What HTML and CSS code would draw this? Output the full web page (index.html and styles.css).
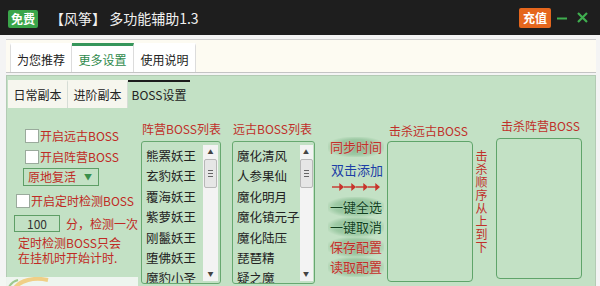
FILE: index.html
```html
<!DOCTYPE html>
<html lang="zh-CN">
<head>
    <meta charset="UTF-8">
    <meta name="viewport" content="width=device-width, initial-scale=1.0">
    <title>【风筝】多功能辅助1.3</title>
    <link rel="stylesheet" href="styles.css">
</head>
<body>
    <div class="titlebar">
        <span class="badge badge-free">免费</span>
        <span class="app-title">【风筝】 多功能辅助1.3</span>
        <span class="spacer"></span>
        <span class="badge badge-pay">充值</span>
        <svg class="win-btn btn-min" width="10" height="10" viewBox="0 0 10 10"><path d="M0 5.5H10" stroke="#3fae4f" stroke-width="2"/></svg>
        <svg class="win-btn btn-close" width="11" height="11" viewBox="0 0 11 11"><path d="M1 1L10 10M10 1L1 10" stroke="#3fae4f" stroke-width="2.2"/></svg>
    </div>

    <div class="window">
        <div class="tabbar">
            <div class="tab">为您推荐</div>
            <div class="tab active">更多设置</div>
            <div class="tab">使用说明</div>
        </div>

        <div class="panel">
            <div class="subtabs">
                <div class="subtab">日常副本</div>
                <div class="subtab">进阶副本</div>
                <div class="subtab active">BOSS设置</div>
            </div>

            <div class="content">
                <!-- left options -->
                <div class="col-opts">
                    <label class="check-row row-1"><span class="checkbox"></span>开启远古BOSS</label>
                    <label class="check-row row-2"><span class="checkbox"></span>开启阵营BOSS</label>
                    <div class="select">原地复活<span class="select-arrow">▼</span></div>
                    <label class="check-row row-3"><span class="checkbox"></span>开启定时检测BOSS</label>
                    <div class="interval-row">
                        <span class="num-input">100</span>
                        <span class="red">分，检测一次</span>
                    </div>
                    <p class="note">定时检测BOSS只会<br>在挂机时开始计时.</p>
                </div>

                <!-- boss lists -->
                <div class="col-list list-camp">
                    <div class="col-title">阵营BOSS列表</div>
                    <div class="listbox">
                        <ul class="items">
                            <li>熊罴妖王</li>
                            <li>玄豹妖王</li>
                            <li>覆海妖王</li>
                            <li>紫萝妖王</li>
                            <li>刚鬣妖王</li>
                            <li>堕佛妖王</li>
                            <li>魔豹小圣</li>
                        </ul>
                        <div class="scrollbar">
                            <span class="sb-arrow">▲</span>
                            <span class="sb-thumb"><i></i><i></i><i></i></span>
                            <span class="sb-fill"></span>
                            <span class="sb-arrow">▼</span>
                        </div>
                    </div>
                </div>

                <div class="col-list list-ancient">
                    <div class="col-title">远古BOSS列表</div>
                    <div class="listbox">
                        <ul class="items">
                            <li>魔化清风</li>
                            <li>人参果仙</li>
                            <li>魔化明月</li>
                            <li>魔化镇元子</li>
                            <li>魔化陆压</li>
                            <li>琵琶精</li>
                            <li>疑之魔</li>
                        </ul>
                        <div class="scrollbar">
                            <span class="sb-arrow">▲</span>
                            <span class="sb-thumb"><i></i><i></i><i></i></span>
                            <span class="sb-fill"></span>
                            <span class="sb-arrow">▼</span>
                        </div>
                    </div>
                </div>

                <!-- action buttons -->
                <div class="col-actions">
                    <div class="act act-red">同步时间</div>
                    <div class="act-hint">双击添加</div>
                    <svg class="arrows" width="48" height="8" viewBox="0 0 48 8">
                        <g stroke="#c8342c" stroke-width="1.4" fill="#c8342c">
                            <path d="M0 4H9"/><path d="M8 1.5L11 4L8 6.5Z"/>
                            <path d="M12 4H21"/><path d="M20 1.5L23 4L20 6.5Z"/>
                            <path d="M24 4H33"/><path d="M32 1.5L35 4L32 6.5Z"/>
                            <path d="M36 4H45"/><path d="M44 1.5L47 4L44 6.5Z"/>
                        </g>
                    </svg>
                    <div class="act act-green">一键全选</div>
                    <div class="act act-green">一键取消</div>
                    <div class="act act-red">保存配置</div>
                    <div class="act act-red">读取配置</div>
                </div>

                <!-- kill order -->
                <div class="col-kill kill-ancient">
                    <div class="col-title">击杀远古BOSS</div>
                    <div class="kill-box"></div>
                </div>
                <div class="vtext">击杀顺序从上到下</div>
                <div class="col-kill kill-camp">
                    <div class="col-title">击杀阵营BOSS</div>
                    <div class="kill-box"></div>
                </div>
            </div>
        </div>
    </div>

    <div class="watermark">
        <svg width="60" height="9" viewBox="0 0 60 9"><path d="M14 12C20 3 34 0 48 3" stroke="#f0cf86" stroke-width="4" fill="none"/><path d="M8 12C10 7 14 4 18 3" stroke="#9cc98e" stroke-width="2" fill="none"/></svg>
    </div>
</body>
</html>
```

FILE: styles.css
```css
body {
    margin: 0;
    width: 600px;
    height: 286px;
    overflow: hidden;
    position: relative;
    background: #eceeec;
    font-family: "Noto Sans CJK SC", "Liberation Sans", sans-serif;
    font-size: 12px;
    color: #222;
}
.titlebar {
    height: 35px;
    background: #1e1e1e;
    display: flex;
    align-items: center;
    padding: 0 12px 0 8px;
}
.badge {
    display: flex;
    align-items: center;
    justify-content: center;
    color: #fff;
    font-weight: bold;
    font-size: 12px;
    border-radius: 2px;
}
.badge-free {
    width: 30px;
    height: 18px;
    margin-top: 2px;
    background: #3aa54a;
}
.app-title {
    margin-left: 12px;
    color: #f0f0f0;
    font-size: 14px;
}
.spacer {
    flex: 1;
}
.badge-pay {
    width: 32px;
    height: 20px;
    background: #e5661d;
}
.btn-min {
    margin-left: 6px;
}
.btn-close {
    margin-left: 10px;
}

.window {
    padding: 4px 4px 0 6px;
    background: #f4f4f4;
}
.tabbar {
    height: 29px;
    padding-top: 3px;
    padding-left: 4px;
    display: flex;
    background: #fdfbf2;
    border-top: 1px solid #cfcfcf;
    border-bottom: 1px solid #c4c4c4;
}
.tab {
    width: 62px;
    display: flex;
    align-items: center;
    justify-content: center;
    background: #fff;
    border-right: 1px solid #dcdcdc;
    border-top: 3px solid transparent;
    box-sizing: border-box;
}
.tab:first-child {
    border-left: 1px solid #dcdcdc;
}
.tab.active {
    border-top-color: #36965a;
    color: #2f8a4c;
}

.panel {
    margin-top: 2px;
    height: 220px;
    background: #c3e1c5;
    border: 1px solid #b3cbb4;
    padding-top: 4px;
}
.subtabs {
    display: flex;
    height: 28px;
    padding-left: 1px;
}
.subtab {
    width: 60px;
    display: flex;
    align-items: center;
    justify-content: center;
    padding-bottom: 2px;
    background: #f6f6ee;
    border-right: 1px solid #d6ddd6;
    border-top: 2px solid transparent;
    box-sizing: border-box;
}
.subtab.active {
    width: 62px;
    background: transparent;
    border-top-color: #1c1c1c;
    border-right: none;
}

.content {
    display: flex;
    align-items: flex-start;
}
.red {
    color: #c02a24;
}
.col-opts {
    width: 134px;
    color: #c02a24;
}
.check-row {
    display: flex;
    align-items: center;
    height: 15px;
}
.checkbox {
    width: 14px;
    height: 14px;
    background: #fff;
    border: 1px solid #9aaa9c;
    box-sizing: border-box;
    margin-right: 1px;
}
.row-1 {
    margin: 20px 0 0 18px;
}
.row-2 {
    margin: 6px 0 0 18px;
}
.row-3 {
    margin: 7px 0 0 9px;
}
.select {
    position: relative;
    width: 76px;
    height: 18px;
    margin: 4px 0 0 16px;
    box-sizing: border-box;
    border: 1px solid #5e9e66;
    padding-left: 4px;
    line-height: 16px;
}
.select-arrow {
    position: absolute;
    right: 6px;
    top: 0;
    font-size: 8px;
    color: #3a8f4c;
}
.interval-row {
    display: flex;
    align-items: center;
    margin: 7px 0 0 7px;
}
.num-input {
    width: 46px;
    height: 17px;
    box-sizing: border-box;
    border: 1px solid #5e9e66;
    text-align: center;
    line-height: 15px;
    color: #333;
    margin-right: 6px;
}
.note {
    margin: 3px 0 0 11px;
    line-height: 15px;
}

.col-title {
    height: 14px;
    line-height: 14px;
    color: #c0302a;
    white-space: nowrap;
}
.col-list .col-title {
    margin: 14px 0 0 1px;
}
.list-camp {
    width: 80px;
}
.list-ancient {
    width: 83px;
    margin-left: 11px;
}
.listbox {
    margin-top: 5px;
    height: 143px;
    box-sizing: border-box;
    border: 1px solid #67a870;
    border-radius: 3px;
    display: flex;
    overflow: hidden;
}
.items {
    flex: 1;
    list-style: none;
    margin: 0;
    padding: 4px 0 0 4px;
}
.items li {
    height: 20.4px;
    line-height: 20px;
    white-space: nowrap;
    overflow: hidden;
    font-size: 12.5px;
}
.scrollbar {
    width: 15px;
    margin: 3px 2px 2px 0;
    background: #f3f3f3;
    display: flex;
    flex-direction: column;
    align-items: center;
}
.sb-arrow {
    height: 14px;
    line-height: 14px;
    font-size: 6px;
    color: #444;
}
.sb-thumb {
    width: 13px;
    height: 29px;
    box-sizing: border-box;
    border: 1px solid #b8b8b8;
    border-radius: 2px;
    background: #e6e6e6;
    display: flex;
    flex-direction: column;
    align-items: center;
    justify-content: center;
    gap: 2px;
}
.sb-thumb i {
    width: 5px;
    height: 1px;
    background: #666;
}
.sb-fill {
    flex: 1;
}

.col-actions {
    width: 59px;
    margin-left: 13px;
    padding-top: 29px;
    display: flex;
    flex-direction: column;
    align-items: flex-start;
    font-size: 13px;
}
.act {
    height: 20px;
    line-height: 20px;
    padding: 0 2px;
    background: radial-gradient(ellipse at center, rgba(70, 140, 90, 0.55) 0%, rgba(90, 160, 105, 0.35) 55%, rgba(195, 225, 197, 0) 78%);
}
.act-red {
    color: #c0302a;
    text-shadow: 0 0 2px #f0c8c0;
}
.act-green {
    color: #123f1e;
    text-shadow: 0 0 2px #c8f0d0;
}
.act-hint {
    margin-top: 3px;
    height: 20px;
    line-height: 20px;
    padding-left: 3px;
    color: #1c3ea6;
}
.arrows {
    margin: 3px 0 6px 4px;
}

.col-kill {
    width: 86px;
}
.kill-ancient .col-title {
    margin: 16px 0 0 2px;
}
.kill-camp {
    margin-left: 6px;
}
.kill-camp .col-title {
    margin: 11px 0 5px 5px;
}
.kill-box {
    margin-top: 3px;
    height: 141px;
    box-sizing: border-box;
    border: 1px solid #5fa46a;
    border-radius: 4px;
}
.vtext {
    width: 14px;
    margin: 42px 0 0 3px;
    writing-mode: vertical-rl;
    text-orientation: upright;
    letter-spacing: 1px;
    color: #c0302a;
}

/* faded logo strip bottom-left */
.watermark {
    position: absolute;
    left: 0;
    top: 277px;
    width: 138px;
    height: 9px;
    background: rgba(243, 247, 243, 0.9);
}
.watermark svg {
    display: block;
}
```
